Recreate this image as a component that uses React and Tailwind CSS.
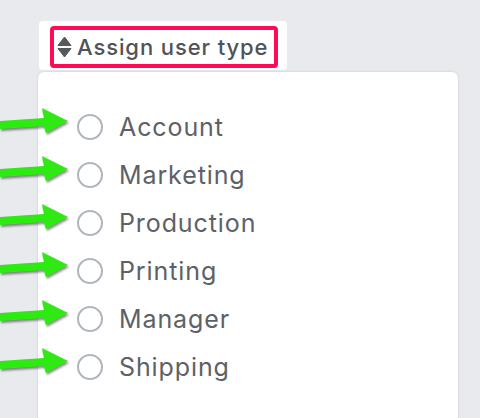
import React from 'react';

const types = ['Account', 'Marketing', 'Production', 'Printing', 'Manager', 'Shipping'];

const Arrow = () => (
  <svg
    width="72"
    height="32"
    viewBox="0 0 72 32"
    className="absolute left-[-77px] top-[3px] drop-shadow-[1px_2px_1px_rgba(0,0,0,0.45)]"
  >
    <polygon points="0,15 44,12 42,2 68,15 46,27 44,20 0,23" fill="#2eea12" />
  </svg>
);

const SortIcon = () => (
  <svg width="15" height="22" viewBox="0 0 15 22" className="shrink-0">
    <path d="M7.5 1 L14 9.5 L1 9.5 Z" fill="#55595e" strokeLinejoin="round" stroke="#55595e" strokeWidth="1" />
    <path d="M1 12.5 L14 12.5 L7.5 21 Z" fill="#55595e" strokeLinejoin="round" stroke="#55595e" strokeWidth="1" />
  </svg>
);

export default function App() {
  return (
    <div
      className="w-[480px] h-[418px] overflow-hidden bg-[#e9eaee] pl-[38px] pt-[21px]"
      style={{ fontFamily: 'Inter, Roboto, "Liberation Sans", sans-serif' }}
    >
      {/* header button */}
      <div className="ml-px w-[248px] h-[49px] bg-white rounded pl-[11px] pt-[5px]">
        <div className="w-[228px] h-[42px] border-4 border-[#ff0a55] rounded-[4px] flex items-center pl-[3px] gap-[5px]">
          <SortIcon />
          <span className="text-[22px] font-medium text-[#4f5358] leading-none tracking-[0.9px] whitespace-nowrap">Assign user type</span>
        </div>
      </div>

      {/* dropdown panel */}
      <div className="mt-[2px] w-[420px] h-[380px] bg-white rounded-md shadow-[0_0_3px_rgba(0,0,0,0.12)] pt-[31px] pl-[39px]">
        {types.map((t) => (
          <div key={t} className="relative h-12 flex items-center gap-4">
            <Arrow />
            <span className="w-[26px] h-[26px] rounded-full border-2 border-[#afb5bc] shrink-0" />
            <span className="text-[25px] text-[#5d6166] leading-none tracking-[0.9px]">{t}</span>
          </div>
        ))}
      </div>
    </div>
  );
}
